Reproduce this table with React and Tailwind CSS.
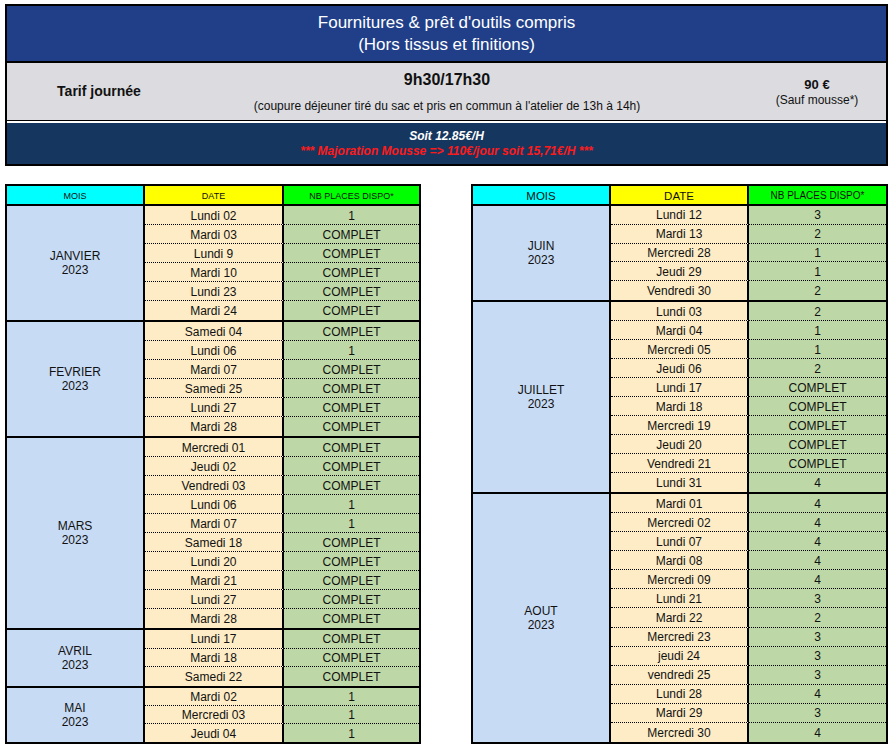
import React from 'react';

const left = [
  { mois: 'JANVIER', h: 'h-[116px]', rows: [['Lundi 02', '1'], ['Mardi 03', 'COMPLET'], ['Lundi 9', 'COMPLET'], ['Mardi 10', 'COMPLET'], ['Lundi 23', 'COMPLET'], ['Mardi 24', 'COMPLET']] },
  { mois: 'FEVRIER', h: 'h-[116px]', rows: [['Samedi 04', 'COMPLET'], ['Lundi 06', '1'], ['Mardi 07', 'COMPLET'], ['Samedi 25', 'COMPLET'], ['Lundi 27', 'COMPLET'], ['Mardi 28', 'COMPLET']] },
  { mois: 'MARS', h: 'h-[192px]', rows: [['Mercredi 01', 'COMPLET'], ['Jeudi 02', 'COMPLET'], ['Vendredi 03', 'COMPLET'], ['Lundi 06', '1'], ['Mardi 07', '1'], ['Samedi 18', 'COMPLET'], ['Lundi 20', 'COMPLET'], ['Mardi 21', 'COMPLET'], ['Lundi 27', 'COMPLET'], ['Mardi 28', 'COMPLET']] },
  { mois: 'AVRIL', h: 'h-[58px]', rows: [['Lundi 17', 'COMPLET'], ['Mardi 18', 'COMPLET'], ['Samedi 22', 'COMPLET']] },
  { mois: 'MAI', h: 'h-[54px]', rows: [['Mardi 02', '1'], ['Mercredi 03', '1'], ['Jeudi 04', '1']] },
];

const right = [
  { mois: 'JUIN', h: 'h-[96px]', rows: [['Lundi 12', '3'], ['Mardi 13', '2'], ['Mercredi 28', '1'], ['Jeudi 29', '1'], ['Vendredi 30', '2']] },
  { mois: 'JUILLET', h: 'h-[192px]', rows: [['Lundi 03', '2'], ['Mardi 04', '1'], ['Mercredi 05', '1'], ['Jeudi 06', '2'], ['Lundi 17', 'COMPLET'], ['Mardi 18', 'COMPLET'], ['Mercredi 19', 'COMPLET'], ['Jeudi 20', 'COMPLET'], ['Vendredi 21', 'COMPLET'], ['Lundi 31', '4']] },
  { mois: 'AOUT', h: 'h-[248px]', rows: [['Mardi 01', '4'], ['Mercredi 02', '4'], ['Lundi 07', '4'], ['Mardi 08', '4'], ['Mercredi 09', '4'], ['Lundi 21', '3'], ['Mardi 22', '2'], ['Mercredi 23', '3'], ['jeudi 24', '3'], ['vendredi 25', '3'], ['Lundi 28', '4'], ['Mardi 29', '3'], ['Mercredi 30', '4']] },
];

function Planning({ groups, big, dateW }) {
  return (
    <div className="border-2 border-black">
      {/* entête */}
      <div className="flex h-[20px] border-b-2 border-black leading-[12px]">
        <div className={`w-[138px] border-r-2 border-black bg-[#00ffff] flex items-center justify-center pt-px ${big ? 'text-[11.5px]' : 'text-[9px]'}`}>MOIS</div>
        <div className={`${dateW} border-r-2 border-black bg-[#ffff00] flex items-center justify-center pt-px ${big ? 'text-[11.5px]' : 'text-[9px]'}`}>DATE</div>
        <div className={`flex-1 bg-[#00ff00] flex items-center justify-center pt-px ${big ? 'text-[10px]' : 'text-[9px]'}`}>NB PLACES DISPO*</div>
      </div>

      {groups.map((g, gi) => (
        <div key={g.mois} className={`flex ${g.h} ${gi < groups.length - 1 ? 'border-b-2 border-black' : ''}`}>
          <div className="w-[138px] border-r-2 border-black bg-[#c8dbf5] flex flex-col items-center justify-center text-[12px] leading-[14px]">
            <span>{g.mois}</span>
            <span>2023</span>
          </div>
          <div className="flex-1 flex flex-col">
            {g.rows.map(([d, n], i) => {
              const dot = i < g.rows.length - 1 ? 'border-b border-black [border-bottom-style:dotted]' : '';
              return (
                <div key={d} className="flex flex-1 min-h-0 text-[12px] leading-[14px]">
                  <div className={`${dateW} border-r-2 border-black bg-[#fdecc6] flex items-center justify-center pt-px ${dot}`}>{d}</div>
                  <div className={`flex-1 bg-[#bdd8a6] flex items-center justify-center pt-px ${dot}`}>{n}</div>
                </div>
              );
            })}
          </div>
        </div>
      ))}
    </div>
  );
}

export default function App() {
  return (
    <div className="min-h-screen bg-white pt-[4px] font-['Liberation_Sans',Arial,sans-serif] text-[#111]">
      {/* bandeau tarif */}
      <div className="ml-[5px] w-[883px] border-2 border-black">
        <div className="h-[57px] border-b-2 border-black bg-[#203f88] flex flex-col items-center justify-center text-white text-[17px] leading-[22px]">
          <span>Fournitures &amp; prêt d'outils compris</span>
          <span>(Hors tissus et finitions)</span>
        </div>
        <div className="h-[58px] border-b border-black bg-[#dcdce0] flex">
          <div className="w-[184px] flex items-center justify-center font-bold text-[14px]">Tarif journée</div>
          <div className="w-[512px] flex flex-col items-center justify-center">
            <span className="font-bold text-[16px] leading-[19px]">9h30/17h30</span>
            <span className="mt-[10px] text-[12px] leading-[14px]">(coupure déjeuner tiré du sac et pris en commun à l'atelier de 13h à 14h)</span>
          </div>
          <div className="flex-1 pl-[45px] flex flex-col items-center justify-center">
            <span className="font-bold text-[13px] leading-[16px]">90 €</span>
            <span className="text-[12px] leading-[14px]">(Sauf mousse*)</span>
          </div>
        </div>
        <div className="h-[2px] bg-white" />
        <div className="h-[41px] bg-[#15365f] flex flex-col items-center justify-center font-bold italic text-[12px] leading-[15px]">
          <span className="text-white">Soit 12.85€/H</span>
          <span className="text-[#ff1a1a]">*** Majoration Mousse =&gt; 110€/jour soit 15,71€/H ***</span>
        </div>
      </div>

      {/* plannings */}
      <div className="flex mt-[18px] ml-[5px]">
        <div className="w-[416px]">
          <Planning groups={left} dateW="w-[139px]" />
        </div>
        <div className="w-[417px] ml-[50px]">
          <Planning groups={right} big dateW="w-[138px]" />
        </div>
      </div>
    </div>
  );
}
